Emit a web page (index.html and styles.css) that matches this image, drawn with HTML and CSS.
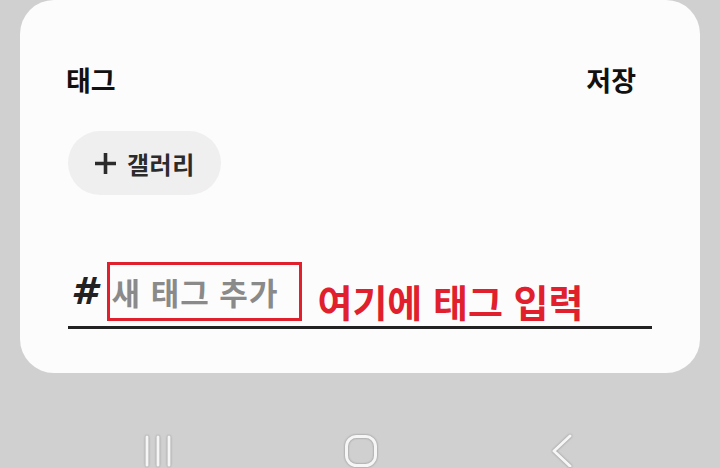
FILE: index.html
```html
<!DOCTYPE html>
<html lang="ko">
<head>
    <meta charset="UTF-8">
    <meta name="viewport" content="width=device-width, initial-scale=1.0">
    <title>태그</title>
    <link rel="stylesheet" href="styles.css">
</head>
<body>
    <div class="sheet">
        <header class="sheet-head">
            <span class="title">태그</span>
            <span class="save">저장</span>
        </header>
        <div class="chips">
            <button class="chip">
                <svg class="plus" width="23" height="23" viewBox="0 0 23 23">
                    <path d="M11.5 1v21M1 11.5h21" stroke="#2b2b2b" stroke-width="3.6" fill="none"/>
                </svg>
                <span>갤러리</span>
            </button>
        </div>
        <div class="tag-input">
            <span class="hash">#</span>
            <span class="placeholder">새 태그 추가</span>
            <span class="note">여기에 태그 입력</span>
            <div class="mark"></div>
        </div>
    </div>
    <nav class="navbar">
        <svg width="30" height="34" viewBox="0 0 30 34">
            <path d="M4 4v28M15 4v28M26 4v28" stroke="#f6f6f6" stroke-width="3" stroke-linecap="round" fill="none"/>
        </svg>
        <svg width="34" height="34" viewBox="0 0 34 34">
            <rect x="2.5" y="3.5" width="29" height="29" rx="10" stroke="#f6f6f6" stroke-width="3" fill="none"/>
        </svg>
        <svg width="26" height="34" viewBox="0 0 26 34">
            <path d="M21 3L5 18l16 15" stroke="#f6f6f6" stroke-width="3" stroke-linecap="round" stroke-linejoin="round" fill="none"/>
        </svg>
    </nav>
</body>
</html>
```

FILE: styles.css
```css
body {
    margin: 0;
    width: 720px;
    height: 468px;
    overflow: hidden;
    background: #d0d0d0;
    font-family: "Noto Sans CJK KR", "Noto Sans", sans-serif;
}

.sheet {
    margin: 0 20px;
    height: 373px;
    background: #fcfcfc;
    border-radius: 34px;
    box-sizing: border-box;
    padding-top: 60px;
}

.sheet-head {
    display: flex;
    justify-content: space-between;
    padding: 0 64px 0 46px;
    font-size: 27px;
    font-weight: 700;
    line-height: 40px;
    color: #111;
}

.chips {
    padding: 31px 0 0 48px;
}

.chip {
    display: flex;
    align-items: center;
    gap: 10px;
    height: 64px;
    width: 153px;
    padding: 0 0 0 26px;
    border: none;
    border-radius: 32px;
    background: #efefef;
    font-family: inherit;
    font-size: 24px;
    letter-spacing: 0.5px;
    font-weight: 700;
    color: #2b2b2b;
}

.tag-input {
    position: relative;
    display: flex;
    align-items: flex-end;
    margin: 67px 48px 0 48px;
    height: 67px;
    border-bottom: 3px solid #222;
    box-sizing: border-box;
}

.hash {
    font-family: "DejaVu Sans", sans-serif;
    font-size: 38px;
    font-weight: 700;
    font-style: italic;
    line-height: 44px;
    color: #222;
    padding-left: 3px;
    margin-bottom: 13px;
}

.placeholder {
    margin-left: 14px;
    font-size: 31px;
    letter-spacing: 1px;
    line-height: 44px;
    color: #8a8a8a;
    font-weight: 600;
    margin-bottom: 12px;
}

.note {
    margin-left: 39px;
    font-size: 38px;
    font-weight: 700;
    line-height: 44px;
    color: #e0202c;
    margin-bottom: 3px;
}

.mark {
    position: absolute;
    left: 39px;
    top: 0;
    width: 195px;
    height: 59px;
    border: 3px solid #e0202c;
    box-sizing: border-box;
}

.navbar {
    display: flex;
    justify-content: space-between;
    align-items: flex-start;
    padding: 60px 145px 0 143px;
}

.navbar svg {
    filter: drop-shadow(0 0 1px rgba(0, 0, 0, 0.35));
}
```
